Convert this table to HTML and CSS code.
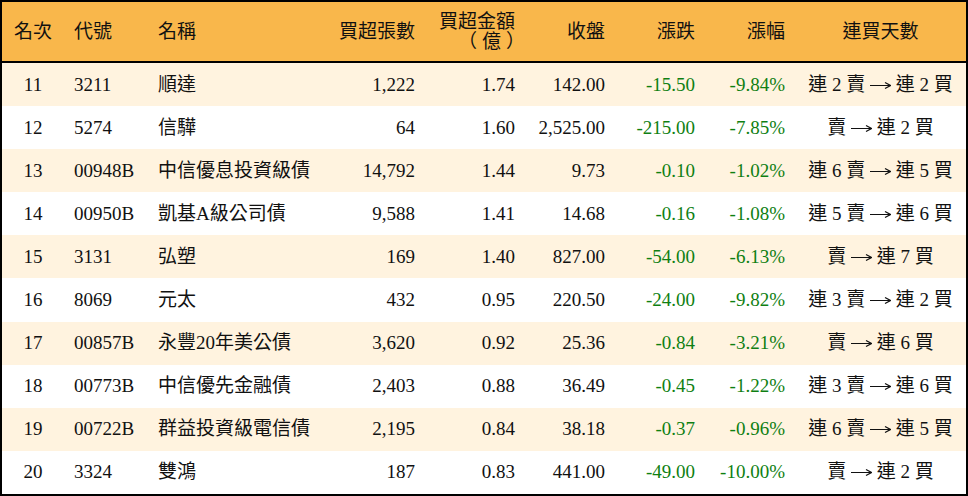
FILE: index.html
```html
<!DOCTYPE html>
<html lang="zh-Hant">
<head>
<meta charset="utf-8">
<link rel="stylesheet" href="styles.css">
</head>
<body>
<table class="rank">
  <colgroup>
    <col class="c1"><col class="c2"><col class="c3"><col class="c4"><col class="c5"><col class="c6"><col class="c7"><col class="c8"><col class="c9">
  </colgroup>
  <thead>
    <tr>
      <th class="ctr">名次</th>
      <th class="lft">代號</th>
      <th class="lft">名稱</th>
      <th class="rgt">買超張數</th>
      <th class="rgt">買超金額<br><span class="unit">（億）</span></th>
      <th class="rgt">收盤</th>
      <th class="rgt">漲跌</th>
      <th class="rgt">漲幅</th>
      <th class="ctr">連買天數</th>
    </tr>
  </thead>
  <tbody>
    <tr class="alt"><td class="ctr">11</td><td class="lft">3211</td><td class="lft">順達</td><td class="rgt">1,222</td><td class="rgt">1.74</td><td class="rgt">142.00</td><td class="rgt dn">-15.50</td><td class="rgt dn">-9.84%</td><td class="ctr">連 2 賣 <svg class="arr" viewBox="0 0 21 10"><path d="M0 5.5H20M15 2.5L20.5 5.5L15 8.5"/></svg> 連 2 買</td></tr>
    <tr><td class="ctr">12</td><td class="lft">5274</td><td class="lft">信驊</td><td class="rgt">64</td><td class="rgt">1.60</td><td class="rgt">2,525.00</td><td class="rgt dn">-215.00</td><td class="rgt dn">-7.85%</td><td class="ctr">賣 <svg class="arr" viewBox="0 0 21 10"><path d="M0 5.5H20M15 2.5L20.5 5.5L15 8.5"/></svg> 連 2 買</td></tr>
    <tr class="alt"><td class="ctr">13</td><td class="lft">00948B</td><td class="lft">中信優息投資級債</td><td class="rgt">14,792</td><td class="rgt">1.44</td><td class="rgt">9.73</td><td class="rgt dn">-0.10</td><td class="rgt dn">-1.02%</td><td class="ctr">連 6 賣 <svg class="arr" viewBox="0 0 21 10"><path d="M0 5.5H20M15 2.5L20.5 5.5L15 8.5"/></svg> 連 5 買</td></tr>
    <tr><td class="ctr">14</td><td class="lft">00950B</td><td class="lft">凱基A級公司債</td><td class="rgt">9,588</td><td class="rgt">1.41</td><td class="rgt">14.68</td><td class="rgt dn">-0.16</td><td class="rgt dn">-1.08%</td><td class="ctr">連 5 賣 <svg class="arr" viewBox="0 0 21 10"><path d="M0 5.5H20M15 2.5L20.5 5.5L15 8.5"/></svg> 連 6 買</td></tr>
    <tr class="alt"><td class="ctr">15</td><td class="lft">3131</td><td class="lft">弘塑</td><td class="rgt">169</td><td class="rgt">1.40</td><td class="rgt">827.00</td><td class="rgt dn">-54.00</td><td class="rgt dn">-6.13%</td><td class="ctr">賣 <svg class="arr" viewBox="0 0 21 10"><path d="M0 5.5H20M15 2.5L20.5 5.5L15 8.5"/></svg> 連 7 買</td></tr>
    <tr><td class="ctr">16</td><td class="lft">8069</td><td class="lft">元太</td><td class="rgt">432</td><td class="rgt">0.95</td><td class="rgt">220.50</td><td class="rgt dn">-24.00</td><td class="rgt dn">-9.82%</td><td class="ctr">連 3 賣 <svg class="arr" viewBox="0 0 21 10"><path d="M0 5.5H20M15 2.5L20.5 5.5L15 8.5"/></svg> 連 2 買</td></tr>
    <tr class="alt"><td class="ctr">17</td><td class="lft">00857B</td><td class="lft">永豐20年美公債</td><td class="rgt">3,620</td><td class="rgt">0.92</td><td class="rgt">25.36</td><td class="rgt dn">-0.84</td><td class="rgt dn">-3.21%</td><td class="ctr">賣 <svg class="arr" viewBox="0 0 21 10"><path d="M0 5.5H20M15 2.5L20.5 5.5L15 8.5"/></svg> 連 6 買</td></tr>
    <tr><td class="ctr">18</td><td class="lft">00773B</td><td class="lft">中信優先金融債</td><td class="rgt">2,403</td><td class="rgt">0.88</td><td class="rgt">36.49</td><td class="rgt dn">-0.45</td><td class="rgt dn">-1.22%</td><td class="ctr">連 3 賣 <svg class="arr" viewBox="0 0 21 10"><path d="M0 5.5H20M15 2.5L20.5 5.5L15 8.5"/></svg> 連 6 買</td></tr>
    <tr class="alt"><td class="ctr">19</td><td class="lft">00722B</td><td class="lft">群益投資級電信債</td><td class="rgt">2,195</td><td class="rgt">0.84</td><td class="rgt">38.18</td><td class="rgt dn">-0.37</td><td class="rgt dn">-0.96%</td><td class="ctr">連 6 賣 <svg class="arr" viewBox="0 0 21 10"><path d="M0 5.5H20M15 2.5L20.5 5.5L15 8.5"/></svg> 連 5 買</td></tr>
    <tr><td class="ctr">20</td><td class="lft">3324</td><td class="lft">雙鴻</td><td class="rgt">187</td><td class="rgt">0.83</td><td class="rgt">441.00</td><td class="rgt dn">-49.00</td><td class="rgt dn">-10.00%</td><td class="ctr">賣 <svg class="arr" viewBox="0 0 21 10"><path d="M0 5.5H20M15 2.5L20.5 5.5L15 8.5"/></svg> 連 2 買</td></tr>
  </tbody>
</table>
</body>
</html>
```
FILE: styles.css
```css
html, body {
  margin: 0;
  padding: 0;
  background: #ffffff;
}

.rank {
  width: 968px;
  height: 496px;
  border-collapse: separate;
  border-spacing: 0;
  table-layout: fixed;
  border: 2px solid #000;
  font-family: "Liberation Serif", "Noto Sans CJK TC", serif;
  font-size: 19px;
  color: #111;
  box-sizing: border-box;
}

.c1 { width: 62px; }
.c2 { width: 84px; }
.c3 { width: 177px; }
.c4 { width: 100px; }
.c5 { width: 100px; }
.c6 { width: 90px; }
.c7 { width: 90px; }
.c8 { width: 90px; }
.c9 { width: 171px; }

.rank th {
  background: #f9b74b;
  font-weight: normal;
  height: 59px;
  padding: 0 10px;
  line-height: 20px;
  border-bottom: 2px solid #000;
  white-space: nowrap;
  vertical-align: middle;
}

.rank th .unit {
  display: inline-block;
  box-sizing: border-box;
  width: 76px;
  padding-left: 19px;
  text-align: center;
  letter-spacing: 5px;
}

.rank td {
  height: 43px;
  padding: 0 10px;
  line-height: 22px;
  white-space: nowrap;
  vertical-align: middle;
}

.rank tr.alt td {
  background: #fff3df;
}

.lft { text-align: left; }
.rgt { text-align: right; }
.ctr { text-align: center; }

.rank td.dn {
  color: #0f7f12;
}

.arr {
  width: 21px;
  height: 10px;
  vertical-align: 1px;
}

.arr path {
  fill: none;
  stroke: #111;
  stroke-width: 1.2;
}
```
